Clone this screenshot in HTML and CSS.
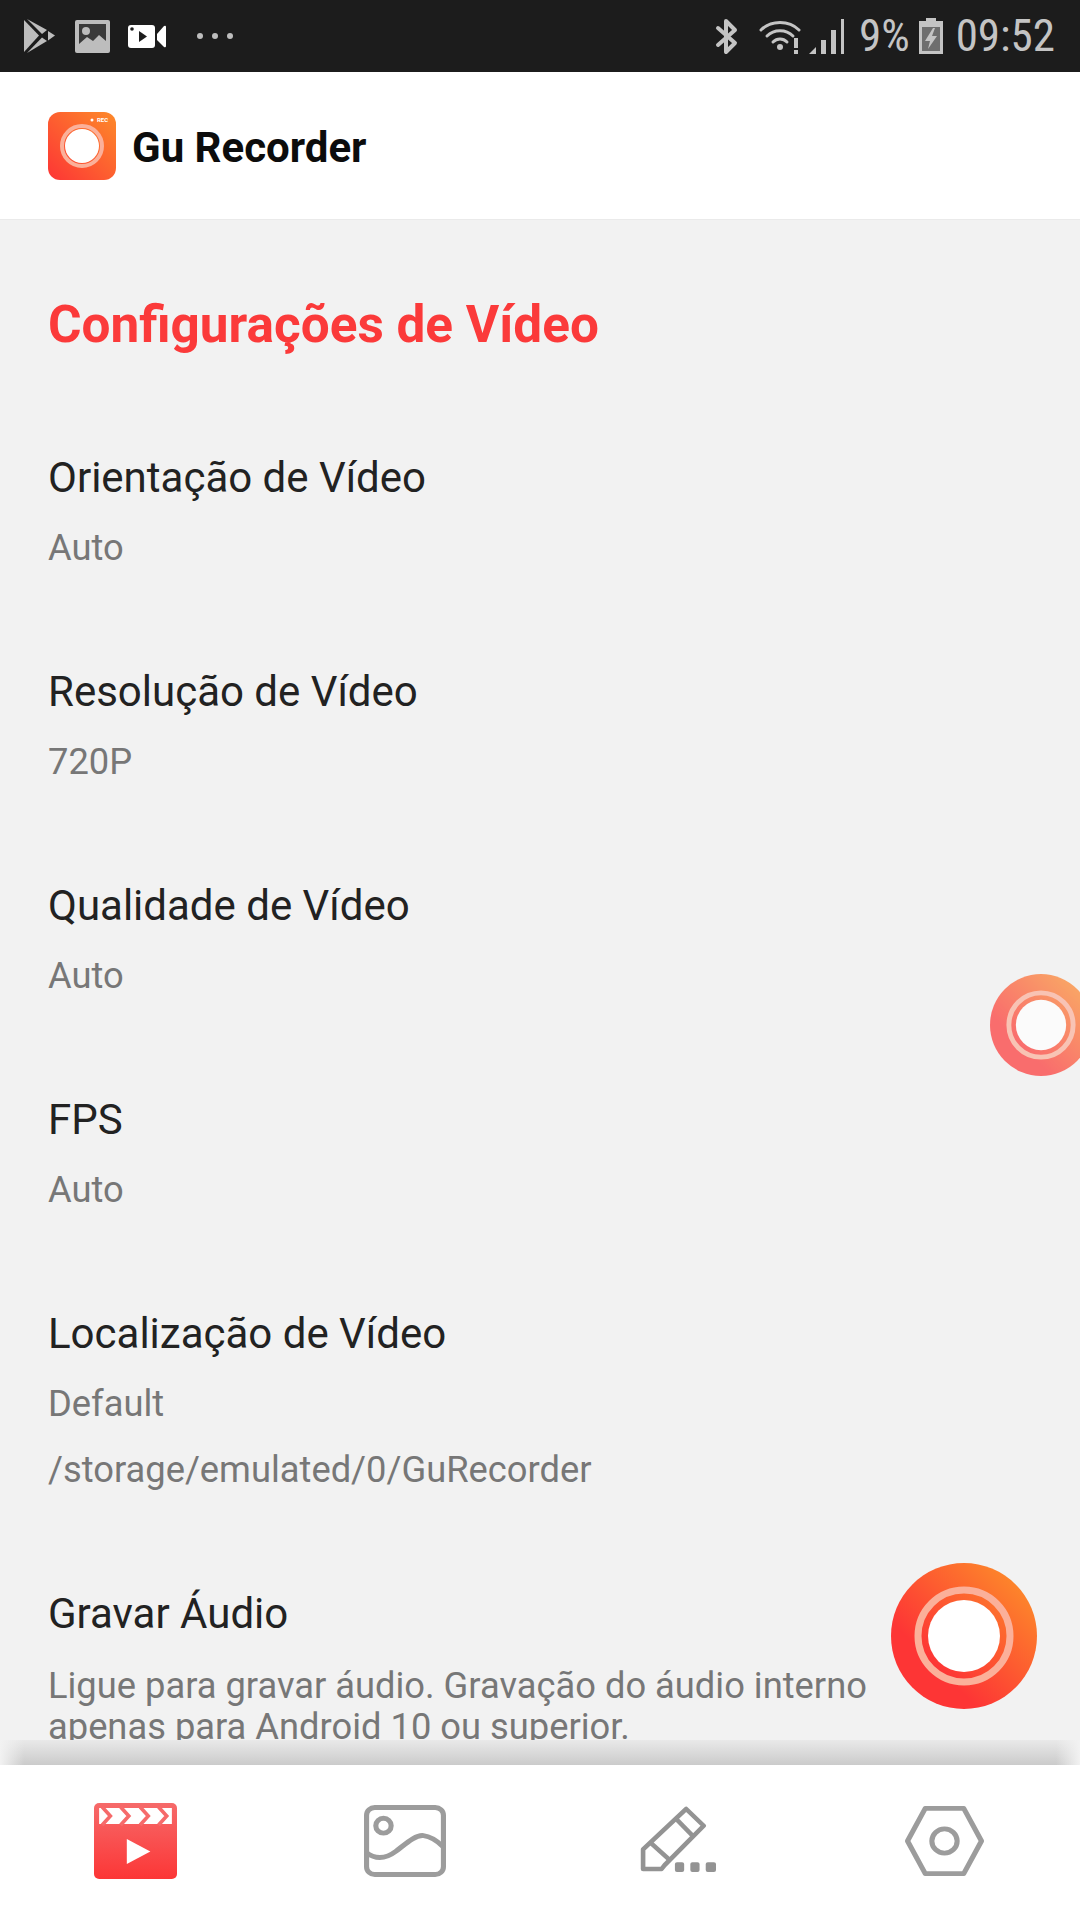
FILE: index.html
```html
<!DOCTYPE html>
<html lang="pt">
<head>
<meta charset="utf-8">
<title>Gu Recorder</title>
<link rel="stylesheet" href="styles.css">
</head>
<body>
<div class="app">
  <div class="status">
    <div class="status-left">
      <svg class="i-play" width="31" height="34" viewBox="0 0 31 34"><g fill="#bdbdbd"><path d="M0 1V33L15 16.5Z"/><path d="M3 0 23 11 18 15Z"/><path d="M24 12 31 16.5 24 21.5Z"/><path d="M3 34 23 22 18 18.500Z"/></g></svg>
      <svg class="i-pic" width="35" height="33" viewBox="0 0 35 33"><rect width="35" height="33" rx="2" fill="#bdbdbd"/><rect x="4" y="4" width="27" height="25" fill="#3a3a3a"/><circle cx="11" cy="11" r="4" fill="#bdbdbd"/><path d="M4 24 12 17 18 21 24 15 31 21V29H4Z" fill="#bdbdbd"/></svg>
      <svg class="i-vid" width="38" height="23" viewBox="0 0 38 23"><rect width="27" height="23" rx="3" fill="#fff"/><circle cx="4" cy="4" r="1.800" fill="#1c1c1c"/><path d="M11 6 19 11.500 11 17Z" fill="#1c1c1c"/><path d="M29 9 36 1Q38 0 38 2V21Q38 23 36 22L29 15Z" fill="#fff"/></svg>
      <svg class="i-dots" width="40" height="8" viewBox="0 0 40 8"><g fill="#bdbdbd"><circle cx="7" cy="4" r="3"/><circle cx="22" cy="4" r="3"/><circle cx="37" cy="4" r="3"/></g></svg>
    </div>
    <div class="status-right">
      <svg width="24" height="37" viewBox="0 0 24 37"><path d="M3 10 20 25 11 34V3L20 12 3 27" fill="none" stroke="#c4c4c4" stroke-width="4" stroke-linejoin="round" stroke-linecap="round"/></svg>
      <svg class="i-wifi" width="42" height="35" viewBox="0 0 42 35"><g fill="none" stroke="#c4c4c4" stroke-width="3" stroke-linecap="round"><path d="M2 11C12 1 30 1 40 11"/><path d="M8 17C15 10 27 10 34 17"/><path d="M14 23C18 19 24 19 28 23"/></g><circle cx="21" cy="28" r="3" fill="#c4c4c4"/><path d="M35 19H39V29H35Z M35 31H39V35H35Z" fill="#c4c4c4"/></svg>
      <svg class="i-sig" width="35" height="35" viewBox="0 0 35 35"><g fill="#c4c4c4"><path d="M0 35 7 28V35Z"/><rect x="12" y="21" width="5" height="14"/><rect x="22" y="11" width="5" height="24"/><rect x="32" y="0" width="3" height="35"/></g></svg>
      <span class="pct">9%</span>
      <svg class="i-bat" width="24" height="36" viewBox="0 0 24 36"><path d="M7 0H17V3H24V36H0V3H7Z" fill="#c4c4c4"/><rect x="3" y="9" width="18" height="24" fill="#6e6e6e"/><path d="M14 10 6 23H11L9 31 18 18H13L16 10Z" fill="#c4c4c4"/></svg>
      <span class="time">09:52</span>
    </div>
  </div>

  <header class="bar">
    <svg class="logo" width="68" height="68" viewBox="0 0 68 68">
      <defs><linearGradient id="lg" x1="1" y1="0" x2="0" y2="1"><stop offset="0" stop-color="#fd8a2a"/><stop offset="1" stop-color="#fd3535"/></linearGradient></defs>
      <rect width="68" height="68" rx="12" fill="url(#lg)"/>
      <circle cx="34" cy="34" r="20" fill="none" stroke="#fbb09a" stroke-width="4"/>
      <circle cx="34" cy="34" r="17" fill="#fff"/>
      <circle cx="44" cy="8" r="1.500" fill="#fff"/>
      <text x="49" y="10" class="rec">REC</text>
    </svg>
    <span class="brand">Gu Recorder</span>
  </header>

  <main class="content">
    <h1 class="section">Configurações de Vídeo</h1>
    <section class="row"><h2>Orientação de Vídeo</h2><p>Auto</p></section>
    <section class="row"><h2>Resolução de Vídeo</h2><p>720P</p></section>
    <section class="row"><h2>Qualidade de Vídeo</h2><p>Auto</p></section>
    <section class="row"><h2>FPS</h2><p>Auto</p></section>
    <section class="row"><h2>Localização de Vídeo</h2><p>Default</p><p>/storage/emulated/0/GuRecorder</p></section>
    <section class="row"><h2>Gravar Áudio</h2><p class="desc">Ligue para gravar áudio. Gravação do áudio interno apenas para Android 10 ou superior.</p></section>
  </main>

  <div class="shade"></div>

  <nav class="nav">
    <svg width="83" height="76" viewBox="0 0 81 76" preserveAspectRatio="none">
      <defs><linearGradient id="film" x1="0" y1="0" x2="0" y2="1"><stop offset="0" stop-color="#f66a6a"/><stop offset="1" stop-color="#fc3636"/></linearGradient></defs>
      <rect width="81" height="76" rx="5" fill="url(#film)"/>
      <rect x="5" y="5" width="71" height="16" fill="#fff"/>
      <g fill="none" stroke="#f66a6a" stroke-width="3.500"><path d="M8 4 16 13 8 22"/><path d="M26 4 34 13 26 22"/><path d="M45 4 53 13 45 22"/><path d="M63 4 71 13 63 22"/></g>
      <path d="M32 36 55 48.500 32 61Z" fill="#fff"/>
    </svg>
    <svg width="82" height="72" viewBox="0 0 80 73" preserveAspectRatio="none"><g fill="none" stroke="#9c9c9c" stroke-width="5"><rect x="2.500" y="2.500" width="75" height="68" rx="8"/><circle cx="19" cy="21" r="7.500"/><path d="M2 48C12 56 22 54 31 47S50 30 58 31 71 36 77 42"/></g></svg>
    <svg class="nav-edit" width="76" height="66" viewBox="0 0 74 67" preserveAspectRatio="none"><g fill="none" stroke="#939393" stroke-width="4.500" stroke-linejoin="round"><path d="M45 3 62 20 24 60 21 64H3V44Z"/><path d="M11 38 28 54"/><path d="M36 14 51 30"/></g><g fill="#939393"><rect x="34" y="57" width="9" height="10" rx="2"/><rect x="49" y="57" width="9" height="10" rx="2"/><rect x="64" y="57" width="10" height="10" rx="2"/></g></svg>
    <svg width="79" height="70" viewBox="0 0 78 72" preserveAspectRatio="none"><g fill="none" stroke="#9c9c9c" stroke-width="5" stroke-linejoin="round"><path d="M20 2.500H58L75.500 36 58 69.500H20L2.500 36Z"/><circle cx="39" cy="36" r="12.500"/></g></svg>
  </nav>

  <svg class="fab fab-side" width="102" height="102" viewBox="0 0 146 146">
    <defs><linearGradient id="fg" x1="0.900" y1="0.100" x2="0.100" y2="0.900"><stop offset="0" stop-color="#fd8a2a"/><stop offset="0.750" stop-color="#fd3535"/></linearGradient></defs>
    <circle cx="73" cy="73" r="73" fill="url(#fg)"/><circle cx="73" cy="73" r="46" fill="none" stroke="#fbb09a" stroke-width="7"/><circle cx="73" cy="73" r="36" fill="#fff"/>
  </svg>
  <svg class="fab fab-main" width="146" height="146" viewBox="0 0 146 146">
    <circle cx="73" cy="73" r="73" fill="url(#fg)"/><circle cx="73" cy="73" r="46" fill="none" stroke="#fbb09a" stroke-width="7"/><circle cx="73" cy="73" r="36" fill="#fff"/>
  </svg>
</div>
</body>
</html>
```

FILE: styles.css
```css
* { box-sizing: border-box; margin: 0; padding: 0; }
html, body { width: 1080px; height: 1920px; overflow: hidden; }
body { font-family: Roboto, "Liberation Sans", sans-serif; background: #f2f2f2; }
.app { position: relative; width: 1080px; height: 1920px; display: flex; flex-direction: column; overflow: hidden; }

.status { height: 72px; flex: none; background: #1c1c1c; display: flex; align-items: center; justify-content: space-between; padding: 0 25px 0 24px; color: #c4c4c4; }
.status-left, .status-right { display: flex; align-items: center; }
.i-pic { margin-left: 20px; }
.i-vid { margin-left: 18px; }
.i-dots { margin-left: 27px; }
.i-wifi { margin-left: 20px; }
.i-sig { margin-left: 8px; }
.pct { margin-left: 15px; font-size: 45px; font-stretch: 80%; line-height: 72px; }
.i-bat { margin-left: 9px; }
.time { margin-left: 13px; font-size: 45px; font-stretch: 80%; line-height: 72px; }

.bar { height: 148px; flex: none; background: #fff; border-bottom: 1px solid #eaeaea; display: flex; align-items: center; padding-left: 48px; gap: 16px; }
.rec { font-size: 6px; font-weight: 700; fill: #fff; }
.brand { font-size: 42px; font-weight: 700; color: #0c0c0c; padding-top: 4px; }

.content { flex: 1; min-height: 0; overflow: hidden; padding-left: 48px; background: #f2f2f2; }
.section { font-size: 51.3px; line-height: 60px; font-weight: 700; color: #fb3a3a; margin-top: 75px; }
.row { margin-top: 98px; }
.row h2 { font-size: 42px; line-height: 50px; font-weight: 400; color: #222; }
.row p { font-size: 36.3px; line-height: 42px; margin-top: 24px; color: #777; }
.row .desc { line-height: 41px; width: 830px; margin-top: 26px; }

.shade { height: 25px; flex: none; background: linear-gradient(to right, #f2f2f2, rgba(242,242,242,0) 24px), linear-gradient(to left, #f2f2f2, rgba(242,242,242,0) 24px), linear-gradient(#e9e9e9, #cbcbcb); }

.nav { height: 155px; flex: none; background: #fff; display: grid; grid-template-columns: 270px 276px 265px auto; align-items: center; padding: 0 0 3px 94px; }
.nav svg { display: block; }
.nav-edit { margin-bottom: 4px; }

.fab { position: absolute; }
.fab-main { left: 891px; top: 1563px; }
.fab-side { left: 990px; top: 974px; opacity: 0.7; }
```
